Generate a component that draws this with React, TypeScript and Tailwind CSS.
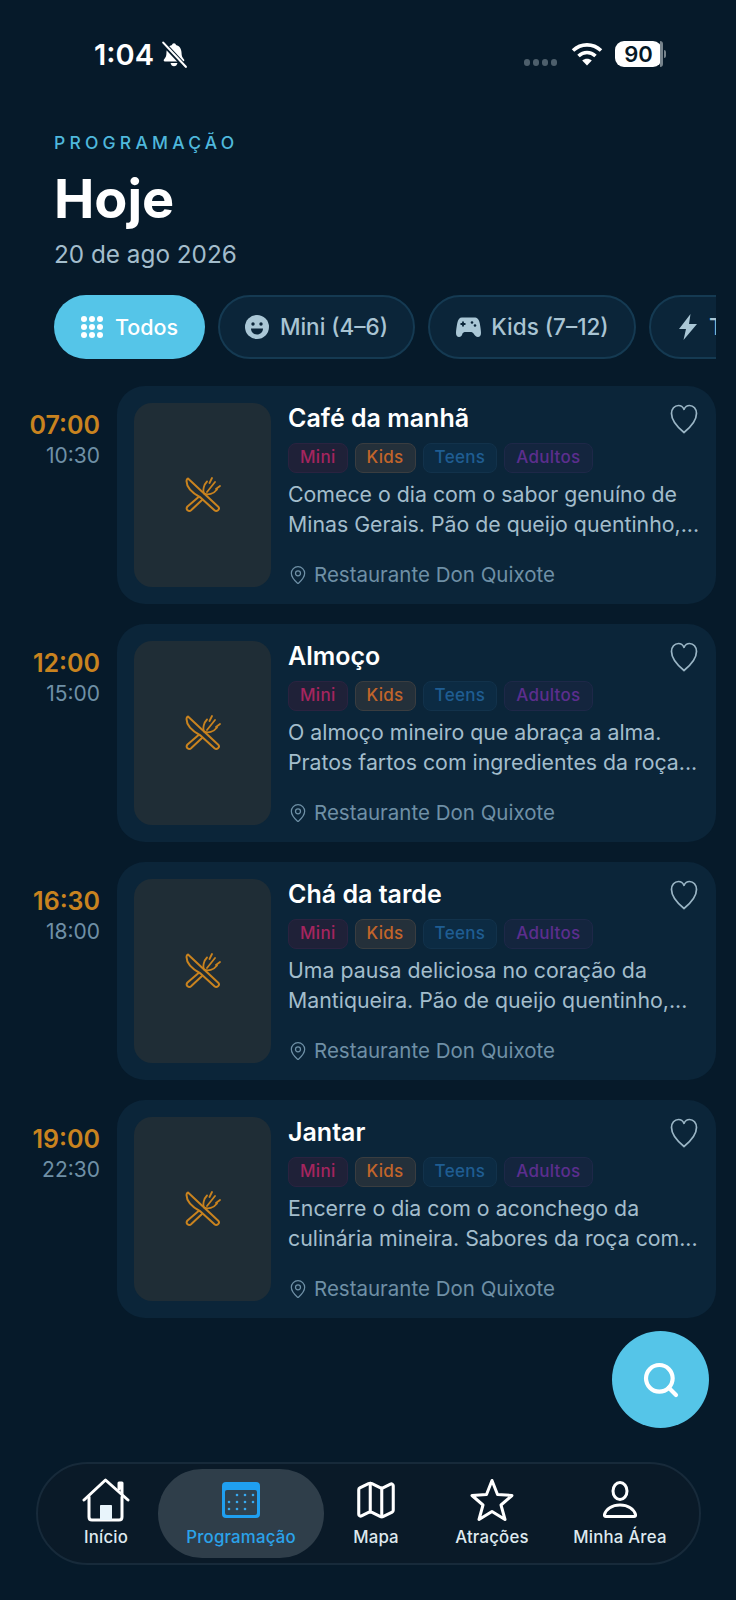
import { MapPin, Search, Map as MapIcon } from "lucide-react";

function Knife() {
  return (
    <svg width="36" height="36" viewBox="0 0 36 36" fill="none" stroke="#c9831f" strokeWidth="2" strokeLinejoin="round" strokeLinecap="round">
      <path d="M3 1.500 33.500 30c1 1.500.5 2.500-.5 3.300s-2.300 1-3.500 0L15.500 20.500C9 17 1.500 11 1.500 4c0-1.200.5-2.200 1.500-2.500z" />
      <path d="M13 20.500 2.500 29.500c-1.300 1.500-1 3 0 3.800s2.600 1 3.800-.2L17 23" />
      <path d="M19 16.500c-1.500-3.500 0-9 3-12M19.500 16.500c3.500 2 9 .5 12.500-4M22 15l8-10M27 1l-2.500 5M35 9l-4 3" strokeWidth="1.800" />
    </svg>
  );
}

function HeartIcon() {
  return (
    <svg width="28" height="30" viewBox="0 0 28 30" fill="none" stroke="#9ab5c5" strokeWidth="1.700" strokeLinejoin="round" className="absolute top-[18px] right-[18px]">
      <path d="M14 28.500C6 22 1.500 16 1.500 9.500 1.500 5 4.500 1.500 8.500 1.500c2.500 0 4.300 1.300 5.500 3.800 1.200-2.500 3-3.800 5.500-3.800 4 0 7 3.500 7 8 0 6.500-4.500 12.500-12.500 19z" />
    </svg>
  );
}

function Bell() {
  return (
    <svg width="28" height="28" viewBox="0 0 26 26" fill="white">
      <path d="M13 2c1 0 1.700.7 1.800 1.600 3.400.8 5.200 3.700 5.200 7.400 0 3 .8 4.600 2.300 6.200.6.700.2 1.800-.8 1.800H4.500c-1 0-1.400-1.100-.8-1.800C5.200 15.600 6 14 6 11c0-3.700 1.800-6.600 5.200-7.400C11.300 2.700 12 2 13 2z" />
      <path d="M9.800 20.500h6.400c-.3 1.900-1.600 3-3.200 3s-2.900-1.100-3.200-3z" />
      <path d="M2.500 1.500 23.500 24" stroke="#061a2a" strokeWidth="4.500" />
      <path d="M3 1.500 24 24" stroke="white" strokeWidth="2" strokeLinecap="round" />
    </svg>
  );
}

function Wifi() {
  return (
    <svg width="32" height="24" viewBox="0 0 32 24" fill="none" stroke="white" strokeWidth="3.600">
      <path d="M2 8.500c8-7.500 20-7.500 28 0" />
      <path d="M7.500 14c5-4.600 12-4.600 17 0" />
      <path d="M16 23.500 11.200 18.500c2.800-2.200 6.800-2.200 9.600 0z" fill="white" stroke="none" />
    </svg>
  );
}

function Grid() {
  const dots = [0, 1, 2, 3, 4, 5, 6, 7, 8];
  return (
    <div className="grid grid-cols-3 gap-[2px]">
      {dots.map((d) => (
        <span key={d} className="h-[6px] w-[6px] rounded-full bg-white" />
      ))}
    </div>
  );
}

function Smile() {
  return (
    <svg width="24" height="24" viewBox="0 0 24 24">
      <circle cx="12" cy="12" r="12" fill="#aac7d6" />
      <circle cx="8" cy="9" r="1.700" fill="#0b2539" />
      <circle cx="16" cy="9" r="1.700" fill="#0b2539" />
      <path d="M6 13.500h12c0 3.500-2.700 6-6 6s-6-2.500-6-6z" fill="#0b2539" />
    </svg>
  );
}

function Pad() {
  return (
    <svg width="26" height="22" viewBox="0 0 26 22">
      <path d="M7 1.500h12c3.500 0 5 2 5.700 5.500.7 3.500 1.300 7.500 1.300 10 0 2.500-1.300 4-3 4-2 0-3-1.500-4.500-3.500-.8-1-1.500-1.500-3-1.500h-5c-1.500 0-2.200.5-3 1.500C7 19.500 6 21 4 21c-1.700 0-3-1.500-3-4 0-2.500.6-6.500 1.300-10C3 3.500 4.500 1.500 7 1.500z" fill="#aac7d6" />
      <path d="M8 5.500v5M5.500 8h5" stroke="#0b2539" strokeWidth="1.800" />
      <circle cx="17" cy="6.500" r="1.300" fill="#0b2539" />
      <circle cx="20" cy="9.500" r="1.300" fill="#0b2539" />
    </svg>
  );
}

function Bolt() {
  return (
    <svg width="20" height="26" viewBox="0 0 20 26">
      <path d="M12.500 0 1 15h7l-2.500 11L19 10h-8z" fill="#aac7d6" />
    </svg>
  );
}

function HomeIcon() {
  return (
    <svg width="48" height="44" viewBox="0 0 48 44" fill="none" stroke="white" strokeWidth="3" strokeLinejoin="round" strokeLinecap="round">
      <path d="M2 22 23.500 2 46 22" />
      <path d="M7 19v20c0 2 1 3 3 3h27c2 0 3-1 3-3V19" />
      <path d="M37 11V5h3v11" />
      <path d="M18 42V28c0-.8.500-1 1-1h10c.5 0 1 .2 1 1v14z" fill="#e8f4fb" stroke="none" />
    </svg>
  );
}

function CalendarIcon() {
  const cols = [0, 1, 2, 3];
  return (
    <svg width="38" height="36" viewBox="0 0 38 36">
      <rect x="0" y="0" width="38" height="36" rx="4" fill="#1f9ff0" />
      <rect x="3" y="8" width="32" height="25" rx="2" fill="#2f4250" />
      {cols.map((c) => (
        <g key={c} fill="#38a9ef">
          {c > 0 && <circle cx={7 + c * 8} cy="13" r="1.300" />}
          <circle cx={7 + c * 8} cy="20" r="1.300" />
          {c < 3 && <circle cx={7 + c * 8} cy="27" r="1.300" />}
        </g>
      ))}
    </svg>
  );
}

function StarIcon() {
  return (
    <svg width="44" height="44" viewBox="0 0 44 44" fill="none" stroke="white" strokeWidth="3" strokeLinejoin="round">
      <path d="M22 2.500 27.500 16.500 42 17.500 31 27 35 41.500 22 33.500 9 41.500 13 27 2 17.500 16.500 16.500z" />
    </svg>
  );
}

function UserIcon() {
  return (
    <svg width="36" height="38" viewBox="0 0 36 38" fill="none" stroke="white" strokeWidth="3">
      <ellipse cx="18" cy="10" rx="7" ry="8.500" />
      <path d="M4 35.500h28c1.200 0 1.800-.7 1.500-2C32 28 26 24 18 24S4 28 2.500 33.500c-.3 1.300.3 2 1.500 2z" strokeLinejoin="round" />
    </svg>
  );
}

const tags = [
  { t: "Mini", c: "text-[#a5255f] bg-[#1f2138] border-[#2a2340]" },
  { t: "Kids", c: "text-[#c2652a] bg-[#24303a] border-[#3a3d40]" },
  { t: "Teens", c: "text-[#1f5d92] bg-[#0c2b43] border-[#12324b]" },
  { t: "Adultos", c: "text-[#5c2e8e] bg-[#14253e] border-[#1e2848]" },
];

const events = [
  { s: "07:00", e: "10:30", title: "Café da manhã", l1: "Comece o dia com o sabor genuíno de", l2: "Minas Gerais. Pão de queijo quentinho,..." },
  { s: "12:00", e: "15:00", title: "Almoço", l1: "O almoço mineiro que abraça a alma.", l2: "Pratos fartos com ingredientes da roça..." },
  { s: "16:30", e: "18:00", title: "Chá da tarde", l1: "Uma pausa deliciosa no coração da", l2: "Mantiqueira. Pão de queijo quentinho,..." },
  { s: "19:00", e: "22:30", title: "Jantar", l1: "Encerre o dia com o aconchego da", l2: "culinária mineira. Sabores da roça com..." },
];

function Row({ ev }: { ev: (typeof events)[number] }) {
  return (
    <div className="flex">
      <div className="flex w-[100px] shrink-0 flex-col items-end pt-[24px] leading-none">
        <span className="text-[25px] leading-[30px] font-semibold text-[#c9831f]">{ev.s}</span>
        <span className="mt-[1px] text-[21px] leading-[30px] text-[#6f90a6]">{ev.e}</span>
      </div>
      <div className="relative ml-[17px] flex h-[218px] w-[599px] rounded-[28px] bg-[#0b2539] p-[17px]">
        <div className="flex h-[184px] w-[137px] shrink-0 items-center justify-center rounded-[18px] bg-[#1f2d36]">
          <Knife />
        </div>
        <div className="ml-[17px] flex min-w-0 flex-1 flex-col">
          <div className="text-[25px] leading-[30px] font-semibold text-white">{ev.title}</div>
          <div className="mt-[10px] flex gap-[7px]">
            {tags.map((t) => (
              <span key={t.t} className={`flex h-[30px] items-center rounded-[8px] border px-[11px] text-[17px] font-medium tracking-[0.3px] ${t.c}`}>
                {t.t}
              </span>
            ))}
          </div>
          <div className="mt-[6px] text-[21.300px] leading-[30px] whitespace-nowrap text-[#a3bdcc]">
            <div>{ev.l1}</div>
            <div>{ev.l2}</div>
          </div>
          <div className="mt-[23px] flex items-center gap-[6px] text-[20.500px] leading-[26px] text-[#6f90a6]">
            <MapPin size={20} strokeWidth={1.500} />
            <span>Restaurante Don Quixote</span>
          </div>
        </div>
        <HeartIcon />
      </div>
    </div>
  );
}

function NavItem({ w, label, active, children }: { w: string; label: string; active?: boolean; children: React.ReactNode }) {
  return (
    <div className={`flex h-[89px] flex-col items-center justify-end pb-[11px] ${w} ${active ? "rounded-[44px] bg-[#2f3e4a]" : ""}`}>
      <div className="flex h-[46px] items-center justify-center">{children}</div>
      <span className={`mt-[4px] text-[16.800px] leading-[20px] tracking-[0.2px] whitespace-nowrap ${active ? "font-medium text-[#2ba3ea]" : "font-[450] text-[#dfe9ef]"}`}>{label}</span>
    </div>
  );
}

export default function App() {
  return (
    <div className="relative h-[1600px] w-[736px] overflow-hidden bg-[#061a2a] font-['Inter',sans-serif]">
      <div className="flex h-[73px] items-end">
        <div className="ml-[94px] flex items-center gap-[6px] text-[29px] leading-[36px] font-semibold text-white">
          1:04
          <Bell />
        </div>
        <div className="ml-auto mr-[70px] mb-[6px] flex items-center">
          <div className="mt-[16px] mr-[14px] flex gap-[3px]">
            <span className="h-[7px] w-[6px] rounded-[3px] bg-[#4d5f6c]" />
            <span className="h-[7px] w-[6px] rounded-[3px] bg-[#4d5f6c]" />
            <span className="h-[7px] w-[6px] rounded-[3px] bg-[#4d5f6c]" />
            <span className="h-[7px] w-[6px] rounded-[3px] bg-[#4d5f6c]" />
          </div>
          <Wifi />
          <div className="ml-[12px] flex h-[26px] w-[47px] items-center justify-center rounded-[9px] bg-white text-[22px] font-semibold text-[#051826]">90</div>
          <div className="ml-[-2px] h-[26px] w-[3px] rounded-r-[4px] bg-[#76838c]" />
          <div className="ml-[1px] h-[8px] w-[2px] rounded-r-[2px] bg-[#76838c]" />
        </div>
      </div>

      <div className="pl-[54px]">
        <div className="mt-[58px] text-[17.500px] leading-[24px] font-medium tracking-[4.200px] text-[#4fb8dc]">PROGRAMAÇÃO</div>
        <div className="mt-[14px] text-[54px] leading-[60px] font-bold text-white">Hoje</div>
        <div className="mt-[10px] text-[24.300px] leading-[30px] text-[#a3bdcc]">20 de ago 2026</div>
      </div>

      <div className="mt-[26px] ml-[54px] flex w-[662px] gap-[13px] overflow-hidden text-[22.500px] font-medium text-[#a9c4d3]">
        <div className="flex h-[64px] w-[151px] shrink-0 items-center justify-center gap-[12px] rounded-[32px] bg-[#55c5e8] text-[21.500px] text-white">
          <Grid />
          Todos
        </div>
        <div className="flex h-[64px] w-[197px] shrink-0 items-center justify-center gap-[11px] rounded-[32px] border-2 border-[#153a52] bg-[#0b2539]">
          <Smile />
          Mini (4–6)
        </div>
        <div className="flex h-[64px] w-[208px] shrink-0 items-center justify-center gap-[10px] rounded-[32px] border-2 border-[#153a52] bg-[#0b2539]">
          <Pad />
          Kids (7–12)
        </div>
        <div className="flex h-[64px] w-[160px] shrink-0 items-center gap-[11px] rounded-[32px] border-2 border-[#153a52] bg-[#0b2539] pl-[27px]">
          <Bolt />
          Teens
        </div>
      </div>

      <div className="mt-[27px] flex flex-col gap-[20px]">
        {events.map((ev) => (
          <Row key={ev.s} ev={ev} />
        ))}
      </div>

      <div className="absolute top-[1331px] left-[612px] flex h-[97px] w-[97px] items-center justify-center rounded-full bg-[#55c5e8]">
        <Search size={40} strokeWidth={2.500} className="text-white" />
      </div>

      <div className="absolute top-[1462px] left-[36px] flex h-[103px] w-[665px] items-center rounded-[52px] border-2 border-[#172a3a] bg-[#0a1a28] pl-[16px]">
        <NavItem w="w-[104px]" label="Início"><HomeIcon /></NavItem>
        <NavItem w="w-[166px]" label="Programação" active><CalendarIcon /></NavItem>
        <NavItem w="w-[104px]" label="Mapa"><MapIcon size={46} strokeWidth={1.600} className="text-white" /></NavItem>
        <NavItem w="w-[128px]" label="Atrações"><StarIcon /></NavItem>
        <NavItem w="w-[128px]" label="Minha Área"><UserIcon /></NavItem>
      </div>
    </div>
  );
}
